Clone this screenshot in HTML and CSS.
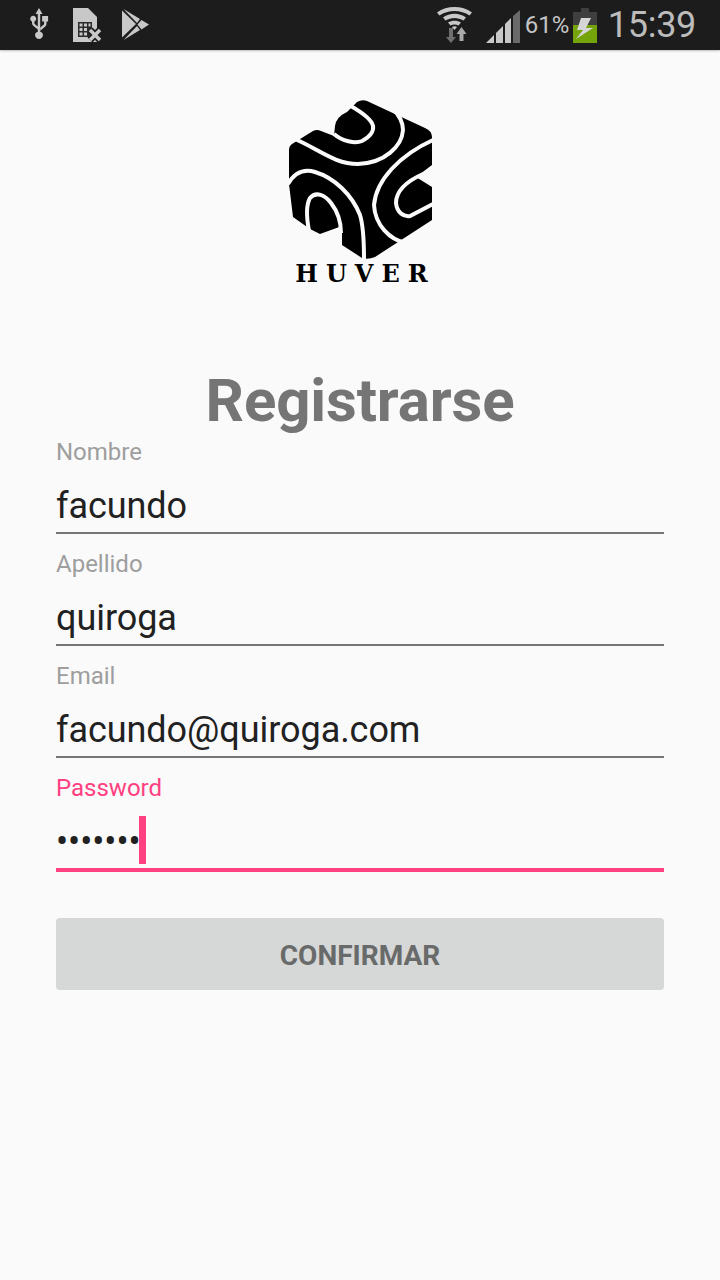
FILE: index.html
```html
<!DOCTYPE html>
<html lang="es">
<head>
<meta charset="utf-8">
<title>Registrarse</title>
<link rel="stylesheet" href="styles.css">
</head>
<body>
<header class="statusbar">
  <div class="status-left">
    <svg class="ic-usb" viewBox="0 0 22 34" width="22" height="34"><path d="M11 0l3.500 6h-2.300v17.500a6 6 0 0 1 0 .2c1.700.5 2.800 1.600 2.800 3.300 0 2.200-1.800 4-4 4s-4-1.800-4-4c0-1.700 1.100-2.800 2.800-3.300v-2.100l-4.600-3.800c-.8-.7-1.200-1.500-1.200-2.500v-1.800a3 3 0 1 1 2.400 0v1.500c0 .5.200.9.600 1.200l2.800 2.300V6H7.500z" fill="#c8c8c8"/><path d="M12.200 19.500l3.300-2.700c.4-.3.600-.7.600-1.200v-2.100h-2V8h6v5.500h-1.600v2.500c0 1-.4 1.800-1.200 2.500l-5.100 4.200z" fill="#c8c8c8"/></svg>
    <svg class="ic-sim" viewBox="0 0 30 34" width="30" height="34">
      <path d="M0 0h15l9 9v25H0z" fill="#c8c8c8"/>
      <rect x="5" y="14" width="14" height="15" fill="#2a2a2a"/>
      <path d="M6.500 15.500h3v3h-3zM11 15.500h3v3h-3zM15.500 15.500h2v3h-2zM6.500 20h3v3h-3zM11 20h3v3h-3zM6.500 24.500h3v3h-3zM11 24.500h3v3h-3z" fill="#c8c8c8"/>
      <path d="M17 22l10 10M27 22L17 32" stroke="#1c1c1c" stroke-width="7" fill="none"/>
      <path d="M17 22l10 10M27 22L17 32" stroke="#c8c8c8" stroke-width="3.500" fill="none"/>
    </svg>
    <svg class="ic-play" viewBox="0 0 27 31" width="27" height="31"><path d="M0 1.500L14 15 0 28.500z" fill="#c8c8c8"/><path d="M1.500 0L18 10 15 14z" fill="#c8c8c8"/><path d="M1.500 31L18 21 15 17z" fill="#c8c8c8"/><path d="M19.500 11L27 15.500 19.500 20.500 15.500 15.500z" fill="#c8c8c8"/></svg>
  </div>
  <div class="status-right">
    <svg class="ic-wifi" viewBox="0 0 36 36" width="36" height="36">
      <path d="M0 5.500C10-1.800 25-1.800 35 5.500l-2.500 3C24 2.500 11 2.500 2.500 8.500z" fill="#c8c8c8"/>
      <path d="M6 10.500c7-5 16-5 23 0l-2.500 3c-5.500-3.500-12.500-3.500-18 0z" fill="#c8c8c8"/>
      <path d="M11 15.500c4-2.500 9-2.500 13 0l-2.500 3c-2.500-1.500-5.500-1.500-8 0z" fill="#c8c8c8"/>
      <path d="M15 20c1.500-1 3.500-1 5 0l-2.500 3z" fill="#c8c8c8"/>
      <path d="M12 21h4v9h3l-5 6-5-6h3z" fill="#6f6f6f"/>
      <path d="M24.500 20l5 7h-3v7h-4v-7h-3z" fill="#a8a8a8"/>
    </svg>
    <svg class="ic-signal" viewBox="0 0 34 34" width="34" height="34"><path d="M0 33L8 25v8z" fill="#c8c8c8"/><path d="M10 23l7-7v17h-7z" fill="#c8c8c8"/><path d="M19 14l6-6v25h-6z" fill="#c8c8c8"/><path d="M27 6l7-6v33h-7z" fill="#6a6a6a"/></svg>
    <span class="battery-pct">61%</span>
    <svg class="ic-batt" viewBox="0 0 24 35" width="24" height="35"><path d="M8 0h8v4h8v14H0V4h8z" fill="#3f3f3f"/><rect y="17" width="24" height="18" fill="#74a30a"/><path d="M8 10h10l-5 10h7L3 31l7-9H4z" fill="#d6d6d6"/></svg>
    <span class="clock">15:39</span>
  </div>
</header>

<main class="page">
  <div class="brand">
    <svg class="logo" viewBox="285 95 150 168" width="150" height="168">
      <path d="M357 102Q362 99 367 101L425 128Q432 131 432 137V165L424 171 416 177 432 187V220L375 257Q368 260 362 258L342 245V226L320 234 310 229 293 217 289 184V150Q289 146 292 144L313 131Q317 129 321 131L334 136 335 126Q336 117 347 112z" fill="#000"/>
      <g fill="none" stroke="#fafafa" stroke-width="4">
        <path d="M295 139C320 150 335 164 358 164C385 163 402 146 403 130C403 122 400 116 393 109"/>
        <path d="M334 134C342 141 355 144 362 141C370 137 374 131 373 126C372 120 365 114 349 105"/>
        <path d="M433 140C400 155 376 180 374 205C375 225 390 240 406 243"/>
        <path d="M423 174C405 182 396 192 396 203C397 213 404 217 410 216L433 204"/>
        <path d="M288 184C295 172 305 169 315 172C335 178 352 195 360 215C364 228 364 245 364 259"/>
        <path d="M309 231C306 215 306 205 310 198C316 191 325 195 331 203C338 212 341 222 341 233"/>
      </g>
    </svg>
    <span class="brand-name">HUVER</span>
  </div>

  <h1 class="title">Registrarse</h1>

  <form class="form">
    <div class="field">
      <label class="field-label">Nombre</label>
      <div class="field-value">facundo</div>
    </div>
    <div class="field">
      <label class="field-label">Apellido</label>
      <div class="field-value">quiroga</div>
    </div>
    <div class="field">
      <label class="field-label">Email</label>
      <div class="field-value">facundo@quiroga.com</div>
    </div>
    <div class="field field-active">
      <label class="field-label">Password</label>
      <div class="field-value"><span class="dots">•••••••</span><span class="caret"></span></div>
    </div>
    <div class="button">CONFIRMAR</div>
  </form>
</main>
</body>
</html>
```

FILE: styles.css
```css
* { box-sizing: border-box; }
html, body { margin: 0; padding: 0; }
body {
  width: 720px;
  height: 1280px;
  overflow: hidden;
  background: #fafafa;
  font-family: Roboto, "Liberation Sans", sans-serif;
}
.statusbar {
  height: 50px;
  background: #1c1c1c;
  display: flex;
  justify-content: space-between;
  align-items: center;
  box-shadow: 0 1px 2px rgba(0,0,0,.25);
}
.status-left { display: flex; align-items: center; padding-left: 28px; }
.ic-usb { margin-right: 23px; margin-top: -1px; }
.ic-sim { margin-right: 19px; margin-top: -1px; }
.ic-play { margin-top: -1px; }
.status-right { display: flex; align-items: center; padding-right: 24px; }
.ic-wifi { margin-right: 13px; }
.ic-signal { margin-right: 5px; margin-top: 3px; }
.battery-pct { font-size: 24px; color: #c4c4c4; margin-right: 4px; width: 44px; white-space: nowrap; }
.ic-batt { margin-right: 11px; margin-top: 1px; }
.clock { font-size: 36px; color: #bcbcbc; letter-spacing: -.3px; line-height: 1; }
.page { display: flex; flex-direction: column; }
.brand { display: flex; flex-direction: column; align-items: center; padding-top: 45px; height: 290px; }
.logo { display: block; }
.brand-name {
  font-family: "DejaVu Serif", serif;
  font-weight: 700;
  font-size: 24px;
  line-height: 20px;
  letter-spacing: 8px;
  margin-right: -11px;
  margin-top: 1px;
  color: #000;
}
.title {
  margin: 25px 0 0;
  height: 72px;
  line-height: 72px;
  text-align: center;
  font-size: 60px;
  font-weight: 700;
  letter-spacing: -.15px;
  color: #757575;
}
.form { display: flex; flex-direction: column; padding: 0 56px; margin-top: -13px; }
.field { height: 112px; display: flex; flex-direction: column; }
.field-label { font-size: 24px; line-height: 28px; color: #9e9e9e; padding-top: 14px; height: 54px; flex: none; }
.field-value {
  height: 56px;
  flex: none;
  padding-top: 2px;
  font-size: 36px;
  letter-spacing: -.06px;
  color: #212121;
  border-bottom: 2px solid #757575;
  display: flex;
  align-items: center;
}
.field-active { height: 112px; }
.field-active .field-label { color: #ff4081; }
.field-active .field-value { height: 58px; border-bottom: 4px solid #ff4081; }
.caret { width: 7px; height: 48px; background: #ff4081; margin: -4px 0 0 -2px; }
.button {
  margin-top: 46px;
  height: 72px;
  padding-top: 3px;
  border-radius: 4px;
  background: #d6d7d7;
  color: #696a6a;
  font-size: 28px;
  font-weight: 700;
  line-height: 69px;
  text-align: center;
}
```
